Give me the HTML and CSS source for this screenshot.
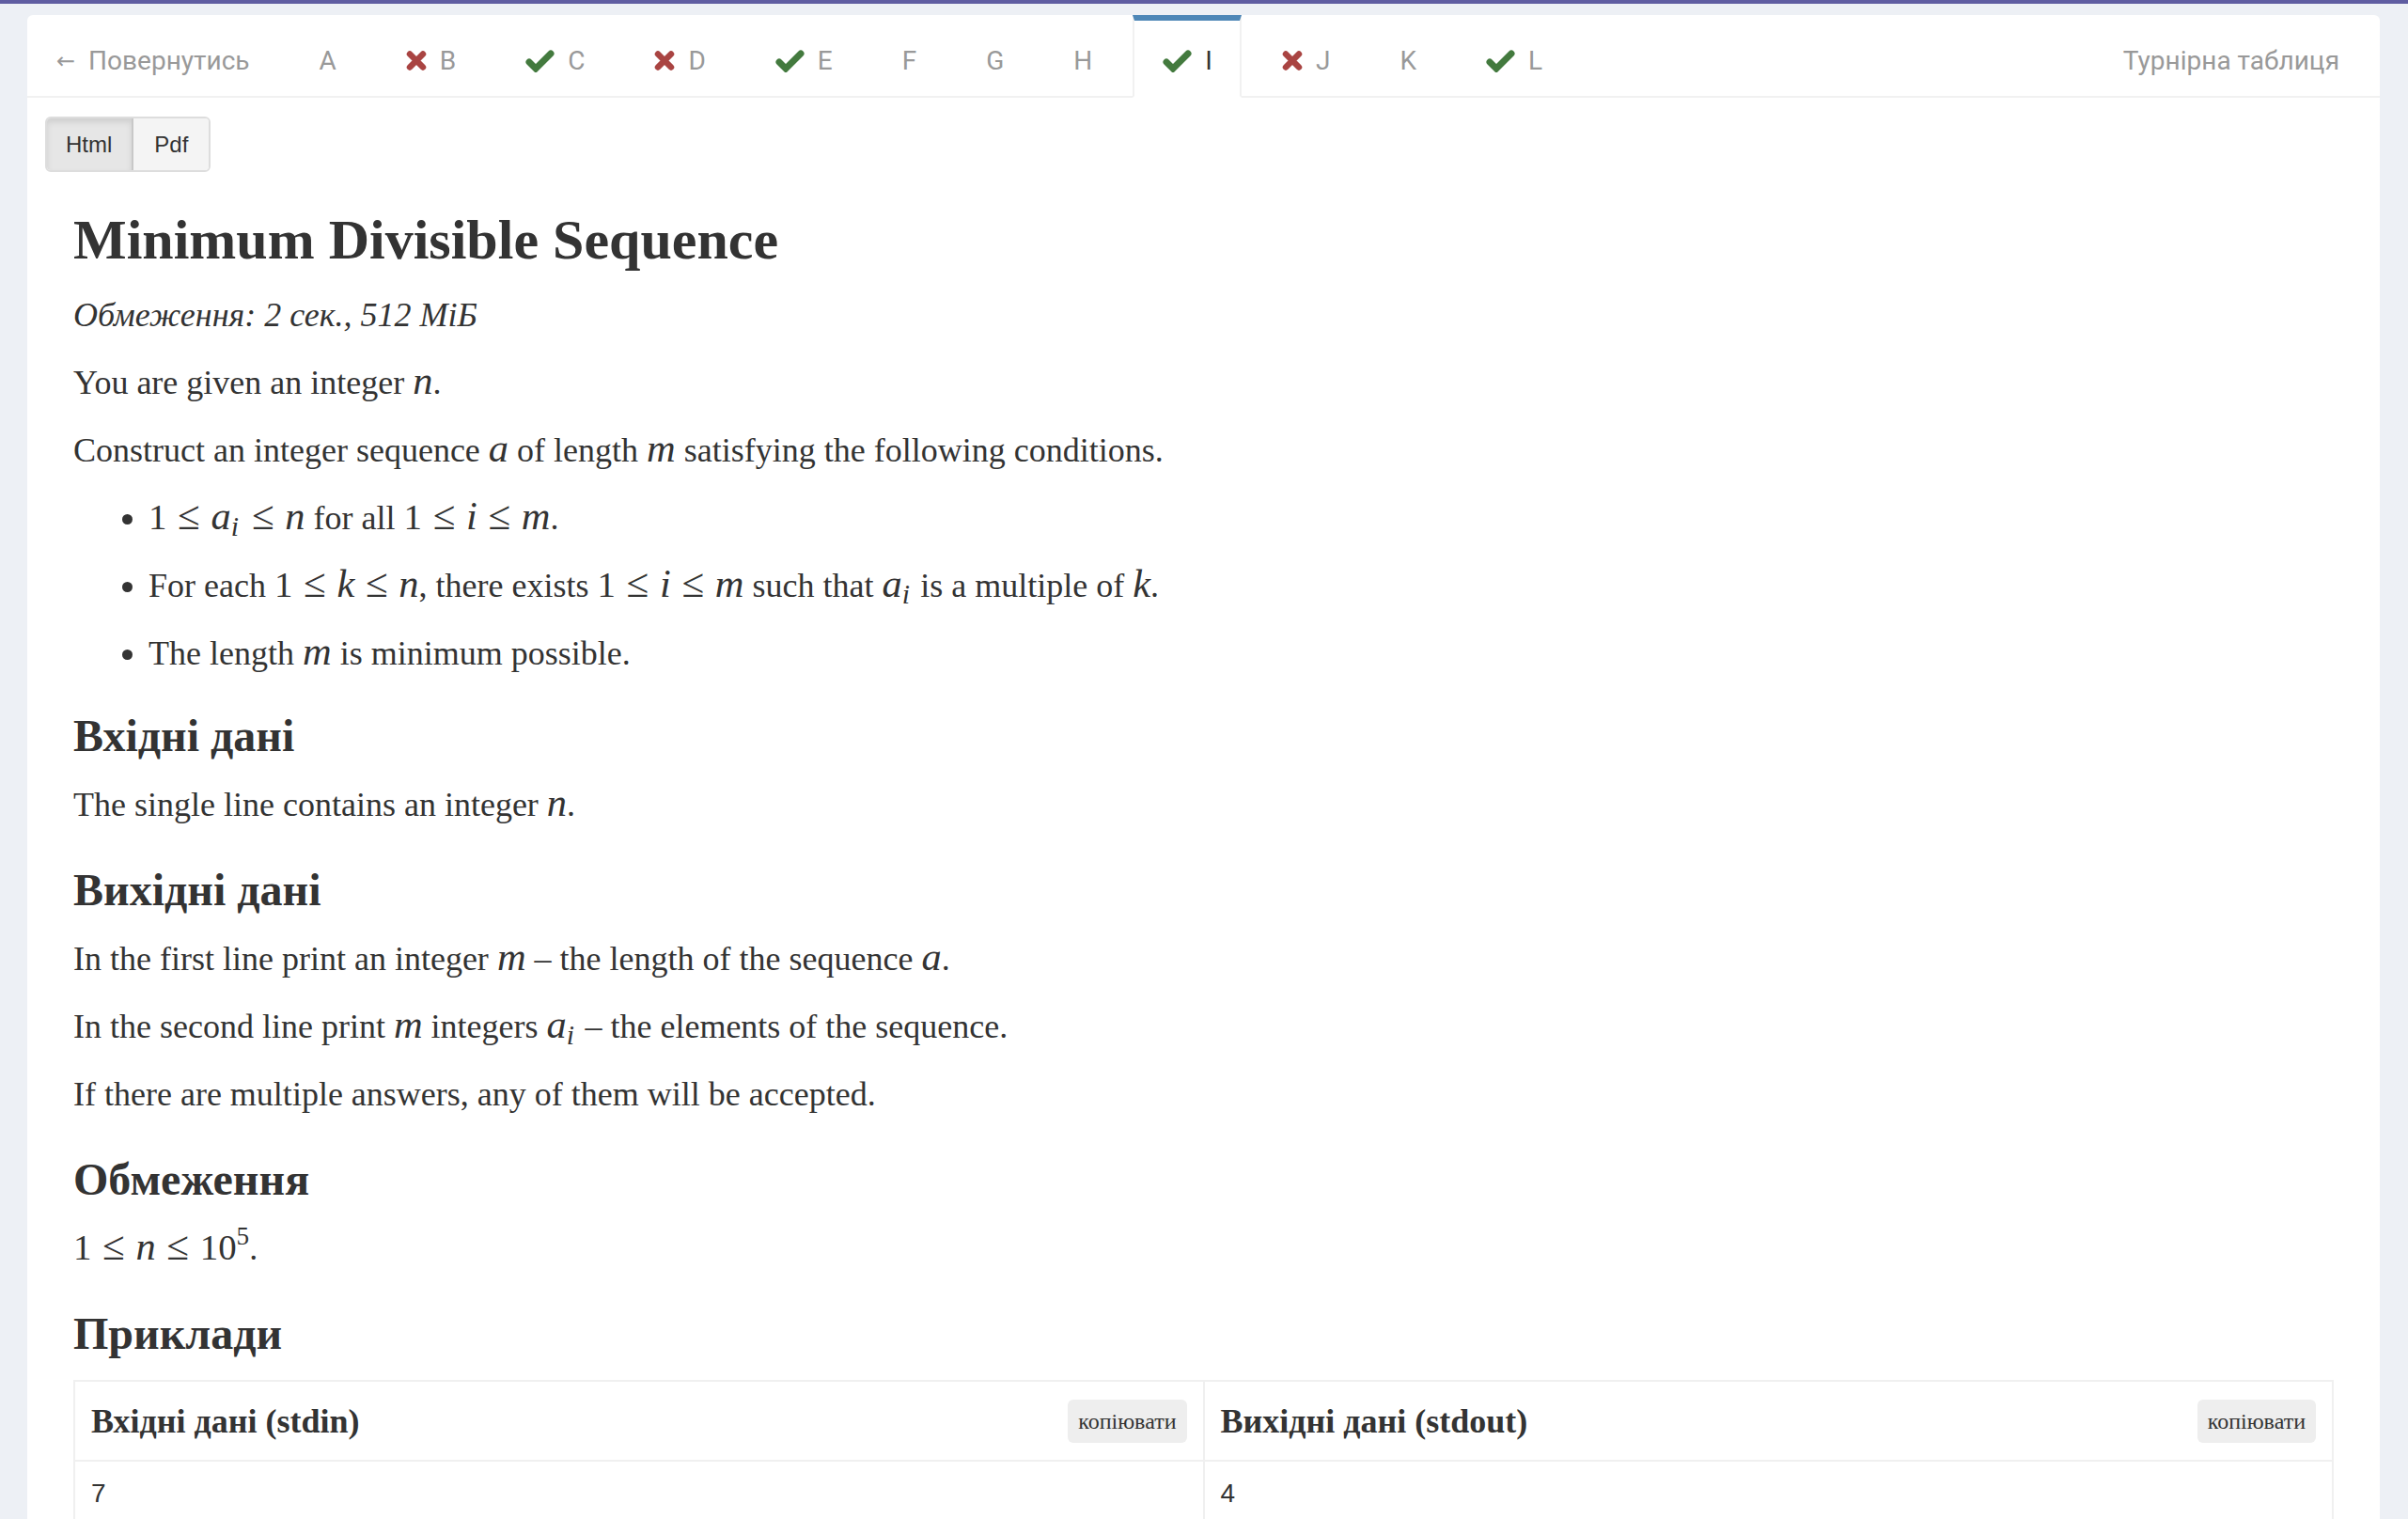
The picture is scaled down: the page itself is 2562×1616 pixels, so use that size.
FILE: index.html
```html
<!DOCTYPE html>
<html lang="uk">
<head>
<meta charset="utf-8">
<title>Minimum Divisible Sequence</title>
<link rel="stylesheet" href="styles.css">
</head>
<body>
<div class="topbar"></div>
<div class="page">
  <div class="card">
    <nav class="tabs">
      <a class="tab back"><span class="arrow">←</span>Повернутись</a>
      <a class="tab">A</a>
      <a class="tab"><svg class="ico-x" viewBox="0 0 22 21"><path d="M4 3.5 L18 17.5 M18 3.5 L4 17.5"/></svg>B</a>
      <a class="tab"><svg class="ico-ok" viewBox="0 0 31 24"><path d="M4 13 L11 20 L27 4"/></svg>C</a>
      <a class="tab"><svg class="ico-x" viewBox="0 0 22 21"><path d="M4 3.5 L18 17.5 M18 3.5 L4 17.5"/></svg>D</a>
      <a class="tab"><svg class="ico-ok" viewBox="0 0 31 24"><path d="M4 13 L11 20 L27 4"/></svg>E</a>
      <a class="tab">F</a>
      <a class="tab">G</a>
      <a class="tab">H</a>
      <a class="tab active"><svg class="ico-ok" viewBox="0 0 31 24"><path d="M4 13 L11 20 L27 4"/></svg>I</a>
      <a class="tab"><svg class="ico-x" viewBox="0 0 22 21"><path d="M4 3.5 L18 17.5 M18 3.5 L4 17.5"/></svg>J</a>
      <a class="tab">K</a>
      <a class="tab"><svg class="ico-ok" viewBox="0 0 31 24"><path d="M4 13 L11 20 L27 4"/></svg>L</a>
      <a class="tab standings">Турнірна таблиця</a>
    </nav>
    <div class="content">
      <div class="btn-group">
        <span class="btn active">Html</span><span class="btn">Pdf</span>
      </div>
      <div class="statement">
        <h1>Minimum Divisible Sequence</h1>
        <p class="limits">Обмеження: 2 сек., 512 МіБ</p>
        <p>You are given an integer <span class="m">n</span>.</p>
        <p>Construct an integer sequence <span class="m">a</span> of length <span class="m">m</span> satisfying the following conditions.</p>
        <ul>
          <li><span class="r">1</span><span class="rel">≤</span><span class="m">a<sub>i</sub></span><span class="rel">≤</span><span class="m">n</span> for all <span class="r">1</span><span class="rel">≤</span><span class="m">i</span><span class="rel">≤</span><span class="m">m</span>.</li>
          <li>For each <span class="r">1</span><span class="rel">≤</span><span class="m">k</span><span class="rel">≤</span><span class="m">n</span>, there exists <span class="r">1</span><span class="rel">≤</span><span class="m">i</span><span class="rel">≤</span><span class="m">m</span> such that <span class="m">a<sub>i</sub></span> is a multiple of <span class="m">k</span>.</li>
          <li>The length <span class="m">m</span> is minimum possible.</li>
        </ul>
        <h2>Вхідні дані</h2>
        <p>The single line contains an integer <span class="m">n</span>.</p>
        <h2>Вихідні дані</h2>
        <p>In the first line print an integer <span class="m">m</span> – the length of the sequence <span class="m">a</span>.</p>
        <p>In the second line print <span class="m">m</span> integers <span class="m">a<sub>i</sub></span> – the elements of the sequence.</p>
        <p>If there are multiple answers, any of them will be accepted.</p>
        <h2>Обмеження</h2>
        <p><span class="r">1</span><span class="rel">≤</span><span class="m">n</span><span class="rel">≤</span><span class="r">10<sup>5</sup></span>.</p>
        <h2>Приклади</h2>
        <table class="samples">
          <thead>
            <tr>
              <th><div class="th-row"><span>Вхідні дані (stdin)</span><span class="copy">копіювати</span></div></th>
              <th><div class="th-row"><span>Вихідні дані (stdout)</span><span class="copy">копіювати</span></div></th>
            </tr>
          </thead>
          <tbody>
            <tr>
              <td><pre>7</pre></td>
              <td><pre>4</pre></td>
            </tr>
          </tbody>
        </table>
      </div>
    </div>
  </div>
</div>
</body>
</html>
```
FILE: styles.css
```css
html, body {
  margin: 0;
  padding: 0;
}
body {
  background: #edf0f5;
  font-family: "Liberation Serif", "Times New Roman", serif;
  color: #333;
  overflow: hidden;
  height: 1616px;
}
.topbar {
  height: 4px;
  background: #5f5da1;
}
.page {
  padding: 12px 30px 0 29px;
}
.card {
  background: #fff;
  border-radius: 6px;
  min-height: 1700px;
}
.tabs {
  display: flex;
  align-items: stretch;
  height: 86px;
  border-bottom: 2px solid #f1f1f1;
  font-family: Roboto, "Liberation Sans", sans-serif;
  font-size: 28px;
  color: #999;
}
.tab {
  display: flex;
  align-items: center;
  gap: 14px;
  padding: 11px 37px 0;
  color: #999;
  text-decoration: none;
  white-space: nowrap;
}
.tab.back {
  padding-left: 31px;
  padding-right: 37px;
  gap: 0;
}
.arrow {
  font-family: "DejaVu Sans", sans-serif;
  font-size: 24px;
  margin-right: 14px;
}
.tab.active {
  color: #333;
  border-top: 6px solid #4e87b7;
  border-left: 2px solid #f1f1f1;
  border-right: 2px solid #f1f1f1;
  border-bottom: 2px solid #fff;
  margin: 0 6px -2px;
  padding: 5px 29px 0 30px;
}
.tab.standings {
  margin-left: auto;
  padding-right: 43px;
}
.ico-x {
  width: 22px;
  height: 21px;
  fill: none;
  stroke: #a94442;
  stroke-width: 6.5;
  stroke-linecap: round;
}
.ico-ok {
  width: 31px;
  height: 24px;
  fill: none;
  stroke: #437a3e;
  stroke-width: 7;
  stroke-linecap: round;
  stroke-linejoin: miter;
}
.content {
  padding: 20px 19px 0;
}
.btn-group {
  display: inline-flex;
  border: 2px solid #ddd;
  border-radius: 6px;
  overflow: hidden;
  font-family: "Liberation Sans", Arial, sans-serif;
  font-size: 24px;
  color: #333;
}
.btn {
  display: block;
  line-height: 55px;
  padding: 0 22px;
  background: #f4f4f4;
}
.btn.active {
  background: #e6e6e6;
  box-shadow: inset 0 4px 6px rgba(0,0,0,0.10);
  border-right: 2px solid #c8c8c8;
  padding: 0 21px 0 20px;
}
.statement {
  padding: 0 30px;
  font-size: 36px;
}
h1 {
  font-size: 60px;
  line-height: 72px;
  margin: 36px 0 24px;
  font-weight: bold;
}
.limits {
  font-style: italic;
}
p {
  margin: 0 0 32px;
  line-height: 40px;
}
ul {
  margin: 0 0 32px;
  padding-left: 80px;
}
li {
  line-height: 40px;
  margin-bottom: 32px;
}
h2 {
  font-size: 48px;
  line-height: 50px;
  margin: 46px 0 28px;
  font-weight: bold;
}
ul + h2 {
  margin-top: 43px;
}
.m, .r, .rel, sub, sup {
  line-height: 0;
}
.m {
  font-style: italic;
  font-size: 1.18em;
}
.r {
  font-size: 1.08em;
}
.rel {
  font-size: 1.2em;
  padding: 0 0.27em;
}
sub {
  font-size: 0.7em;
  vertical-align: -0.25em;
  padding-right: 0.08em;
}
sup {
  font-size: 0.7em;
  vertical-align: 0.6em;
}
.samples {
  width: 100%;
  border-collapse: collapse;
  table-layout: fixed;
  margin-top: -4px;
}
.samples th, .samples td {
  border: 2px solid #f0f0f0;
  padding: 0 17px;
  text-align: left;
}
.samples th {
  height: 83px;
  font-size: 36px;
  font-weight: bold;
}
.th-row {
  display: flex;
  align-items: center;
  justify-content: space-between;
}
.copy {
  background: #eee;
  border-radius: 6px;
  font-size: 24px;
  font-weight: normal;
  line-height: 46px;
  padding: 0 11px;
}
.samples td {
  height: 72px;
  vertical-align: top;
}
pre {
  margin: 0;
  padding-top: 18px;
  font-family: "Liberation Sans", Arial, sans-serif;
  font-size: 28px;
}
```
